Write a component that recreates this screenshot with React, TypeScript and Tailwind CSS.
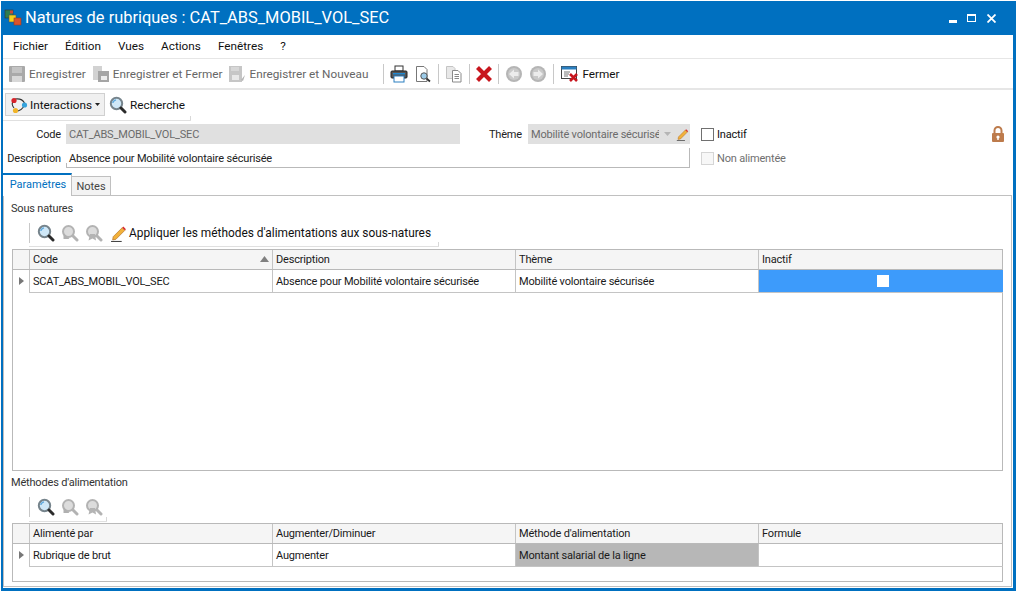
import React from "react";

const font = { fontFamily: 'Roboto, Tahoma, sans-serif' };

function Logo() {
  return (
    <svg width="18" height="18" viewBox="0 0 18 18">
      <rect x="1" y="1" width="8" height="8" fill="#2e7d4f" stroke="#333" strokeWidth="0.6" />
      <rect x="6" y="1.5" width="3" height="3" fill="#c9473a" />
      <rect x="5" y="6" width="7" height="7" fill="#f2d21b" stroke="#555" strokeWidth="0.6" />
      <rect x="10" y="9" width="7" height="7" fill="#d9532c" stroke="#9a3a20" strokeWidth="0.6" />
    </svg>
  );
}

function Save({ variant }: { variant: 0 | 1 | 2 }) {
  return (
    <svg width="18" height="18" viewBox="0 0 18 18">
      {variant === 0 && <rect x="1" y="1" width="16" height="16" rx="1" fill="#a9a9a9" />}
      {variant === 0 && <path d="M4 3 H14 M4 5 H14 M4 7 H14" stroke="#dedede" />}
      {variant === 0 && <rect x="4" y="11" width="10" height="6" fill="#d8d8d8" />}
      {variant === 1 && <rect x="1" y="1" width="9" height="14" fill="#d2d2d2" />}
      {variant === 1 && <rect x="6" y="6" width="11" height="11" fill="#a5a5a5" />}
      {variant === 1 && <rect x="9" y="11" width="6" height="4" fill="#ececec" />}
      {variant === 2 && <rect x="1" y="1" width="13" height="16" fill="#c6c6c6" />}
      {variant === 2 && <path d="M3 3 H11 M3 5 H11" stroke="#e8e8e8" />}
      {variant === 2 && <rect x="4" y="10" width="7" height="5" fill="#e8e8e8" />}
      {variant === 2 && <path d="M13 15 L17 10 L15 16 Z" fill="#b4b4b4" />}
    </svg>
  );
}

function Printer() {
  return (
    <svg width="18" height="18" viewBox="0 0 18 18">
      <rect x="5" y="1" width="8" height="5" fill="#fff" stroke="#333" />
      <rect x="1" y="6" width="16" height="7" rx="1" fill="#555" stroke="#222" />
      <rect x="3" y="8" width="12" height="1.5" fill="#1e88d2" />
      <rect x="4" y="11" width="10" height="6" fill="#fff" stroke="#2a7fc0" />
    </svg>
  );
}

function Preview() {
  return (
    <svg width="18" height="18" viewBox="0 0 18 18">
      <path d="M2.5 1.5 H10 L13 4.5 V16.5 H2.5 Z" fill="#fff" stroke="#777" />
      <circle cx="10" cy="11" r="3.2" fill="#9ccbe8" stroke="#555" />
      <path d="M12.5 13.5 L16 16.5" stroke="#333" strokeWidth="1.8" />
    </svg>
  );
}

function CopyDoc() {
  return (
    <svg width="18" height="18" viewBox="0 0 18 18">
      <path d="M1.5 1.5 H8 L10 3.5 V13.5 H1.5 Z" fill="#e8e8e8" stroke="#c4c4c4" />
      <path d="M7.5 5.5 H13 L16 8.5 V17 H7.5 Z" fill="#fff" stroke="#8a8a8a" />
      <path d="M9.5 9.5 H14 M9.5 11.5 H14 M9.5 13.5 H14" stroke="#888" />
    </svg>
  );
}

function RedX({ size = 18 }: { size?: number }) {
  return (
    <svg width={size} height={size} viewBox="0 0 18 18">
      <path d="M2.5 2.5 L15.5 15.5 M15.5 2.5 L2.5 15.5" stroke="#c8161e" strokeWidth="4.2" />
    </svg>
  );
}

function Nav({ dir }: { dir: "l" | "r" }) {
  return (
    <svg width="18" height="18" viewBox="0 0 18 18">
      <circle cx="9" cy="9" r="8" fill="#b5b5b5" />
      <circle cx="9" cy="9" r="6" fill="#c9c9c9" />
      {dir === "l" ? (
        <path d="M4 9 L9 4.5 V7 H13.5 V11 H9 V13.5 Z" fill="#ececec" />
      ) : (
        <path d="M14 9 L9 4.5 V7 H4.5 V11 H9 V13.5 Z" fill="#ececec" />
      )}
    </svg>
  );
}

function CloseWin() {
  return (
    <svg width="18" height="18" viewBox="0 0 18 18">
      <rect x="0.5" y="1.5" width="15" height="12" fill="#fff" stroke="#444" />
      <rect x="0.5" y="1.5" width="15" height="3" fill="#2a7fc0" />
      <path d="M3 7 H9 M3 9 H8 M3 11 H7" stroke="#777" />
      <path d="M9 9 L16 16 M16 9 L9 16" stroke="#c8161e" strokeWidth="2.6" />
    </svg>
  );
}

function Interactions() {
  return (
    <svg width="18" height="18" viewBox="0 0 18 18">
      <path d="M5 3 Q12 2 14.5 7 M13.5 11 Q11 14.5 8 15 M4 12 Q1 8 3 6" fill="none" stroke="#333" strokeWidth="1.1" />
      <circle cx="4" cy="4.5" r="2.6" fill="#d8232a" />
      <circle cx="14.5" cy="9" r="2.6" fill="#36a3dc" />
      <circle cx="5.5" cy="14.5" r="2.6" fill="#f0b429" />
    </svg>
  );
}

function Magnifier() {
  return (
    <svg width="18" height="18" viewBox="0 0 18 18">
      <circle cx="7.5" cy="7.5" r="5.7" fill="#cfe8f8" stroke="#76848c" strokeWidth="2" />
      <path d="M3.8 7 A4 4 0 0 1 7 3.8" fill="none" stroke="#5fa9dd" strokeWidth="1.3" />
      <path d="M12 12 L16 16" stroke="#2b2b2b" strokeWidth="3" strokeLinecap="round" />
    </svg>
  );
}

function MagnifierOff({ star }: { star?: boolean }) {
  return (
    <svg width="18" height="18" viewBox="0 0 18 18">
      <circle cx="7.5" cy="7.5" r="5.5" fill="#dcdcdc" stroke="#b3b3b3" strokeWidth="2" />
      <path d="M12 12 L16 16" stroke="#b3b3b3" strokeWidth="3" strokeLinecap="round" />
      {star ? (
        <path d="M5 10 L3.5 16.5 L7.5 14.5 L11 16.5 L10 10 Z" fill="#b4b4b4" />
      ) : (
        <path d="M2.5 9 L2.5 15 L8.5 15 Z" fill="#b0b0b0" />
      )}
    </svg>
  );
}

function Pencil({ size = 16 }: { size?: number }) {
  return (
    <svg width={size} height={size} viewBox="0 0 16 16">
      <path d="M3 11 L11.5 2.5 L14 5 L5.5 13.5 L2.5 14 Z" fill="#f2b13a" stroke="#b9772a" strokeWidth="0.7" />
      <path d="M11.5 2.5 L14 5 L15 4 L12.5 1.5 Z" fill="#d8262c" />
      <path d="M1 15.5 H11" stroke="#444" />
    </svg>
  );
}

function Lock() {
  return (
    <svg width="14" height="16" viewBox="0 0 14 16">
      <path d="M3.5 7 V4.5 a3.5 3.5 0 0 1 7 0 V7" fill="none" stroke="#bd7b4c" strokeWidth="2" />
      <rect x="1" y="7" width="12" height="9" rx="1" fill="#bd7b4c" />
      <circle cx="7" cy="11" r="1.6" fill="#fff" />
      <rect x="6.3" y="11" width="1.4" height="3" fill="#fff" />
    </svg>
  );
}

function Sep() {
  return <div className="w-px h-[20px] bg-[#c8c8c8]" />;
}

function Tick() {
  return <div className="absolute right-0 bottom-0 w-px h-[4px] bg-[#d8d8d8]" />;
}

function ToolBtn({ icon, label, muted }: { icon: React.ReactNode; label: string; muted?: boolean }) {
  return (
    <div className="flex items-center gap-[3px]">
      {icon}
      <span className={muted ? "text-[#666] pt-[2px]" : "text-[#111] pt-[2px]"}>{label}</span>
    </div>
  );
}

function Grid({
  headers,
  cells,
  height,
  selected,
}: {
  headers: string[];
  cells: React.ReactNode[];
  height: string;
  selected: number;
}) {
  const cols = "grid grid-cols-[16px_243px_243px_243px_245px]";
  return (
    <div className={`mx-[8px] border border-[#b9b9b9] ${height} text-[#1a1a1a] tracking-[-0.18px]`}>
      <div className={`${cols} h-[20px] bg-[#f5f5f5] border-b border-[#b9b9b9]`}>
        <div />
        {headers.map((h, i) => (
          <div key={i} className="relative flex items-center pl-[3px] border-l border-[#c4c4c4]">
            {h}
            {h === "Code" && (
              <svg className="absolute right-[3px] top-[6px]" width="9" height="6" viewBox="0 0 9 6">
                <path d="M0 6 L4.5 0 L9 6 Z" fill="#808080" />
              </svg>
            )}
          </div>
        ))}
      </div>
      <div className={`${cols} h-[23px]`}>
        <div className="flex items-center justify-center border-b border-transparent">
          <svg width="5" height="8" viewBox="0 0 5 8">
            <path d="M0 0 L5 4 L0 8 Z" fill="#777" />
          </svg>
        </div>
        {cells.map((c, i) => (
          <div
            key={i}
            className={
              "flex items-center pl-[3px] border-l border-b border-[#c4c4c4] " +
              (i === selected && selected === 3 ? "bg-[#3d9bfb] justify-center border-[#3d9bfb] pl-0 " : "") +
              (i === selected && selected === 2 ? "bg-[#b7b7b7] " : "")
            }
          >
            {c}
          </div>
        ))}
      </div>
    </div>
  );
}

export default function App() {
  return (
    <div
      className="w-[1016px] h-[591px] flex flex-col bg-[#0070c0] border-t border-l border-white pl-[2px] pr-[3px] pb-[3px] overflow-hidden text-[11px] leading-none"
      style={font}
    >
      <div className="h-[34px] shrink-0 flex items-center text-white">
        <div className="ml-[1px] mr-[3px] -mt-[1px]">
          <Logo />
        </div>
        <span className="text-[16.4px] flex-1 font-normal pt-[1px]">Natures de rubriques : CAT_ABS_MOBIL_VOL_SEC</span>
        <div className="flex items-center gap-[10px] mr-[17px]">
          <div className="w-[8px] h-[2.5px] bg-white mt-[7px]" />
          <div className="w-[9px] h-[8px] border border-white border-t-[2px]" />
          <svg width="9" height="9" viewBox="0 0 9 9" className="ml-[1px]">
            <path d="M0.5 0.5 L8.5 8.5 M8.5 0.5 L0.5 8.5" stroke="#fff" strokeWidth="1.8" />
          </svg>
        </div>
      </div>

      <div className="flex-1 flex flex-col bg-white min-h-0">
        <div className="h-[24px] shrink-0 flex items-center gap-[17px] pl-[10px] border-b border-[#e6e6e6] text-[#111] text-[11.75px]">
          <span>Fichier</span>
          <span>Édition</span>
          <span>Vues</span>
          <span>Actions</span>
          <span>Fenêtres</span>
          <span>?</span>
        </div>

        <div className="h-[31px] shrink-0 flex items-center pl-[5px] border-b-2 border-[#e6e6e6] text-[11.75px]">
          <ToolBtn muted icon={<Save variant={0} />} label="Enregistrer" />
          <div className="w-[6px]" />
          <ToolBtn muted icon={<Save variant={1} />} label="Enregistrer et Fermer" />
          <div className="w-[6px]" />
          <ToolBtn muted icon={<Save variant={2} />} label="Enregistrer et Nouveau" />
          <div className="w-[15px]" />
          <Sep />
          <div className="ml-[6px] flex items-center gap-[6px]">
            <Printer />
            <Preview />
          </div>
          <div className="w-[6px]" />
          <Sep />
          <div className="mx-[6px]">
            <CopyDoc />
          </div>
          <Sep />
          <div className="mx-[5px]">
            <RedX />
          </div>
          <Sep />
          <div className="ml-[6px] flex gap-[6px]">
            <Nav dir="l" />
            <Nav dir="r" />
          </div>
          <div className="w-[6px]" />
          <Sep />
          <div className="ml-[7px]">
            <ToolBtn icon={<CloseWin />} label="Fermer" />
          </div>
        </div>

        <div className="relative h-[31px] shrink-0 w-[188px] flex items-start pt-[3px] pl-[2px] text-[11.75px] border-b border-[#e0e0e0]">
          <Tick />
          <div className="h-[23px] flex items-center gap-[2px] px-[4px] bg-[#f0f0f0] border border-[#d0d0d0] text-[#111]">
            <Interactions />
            <span className="pt-[2px]">Interactions</span>
            <svg width="5" height="3" viewBox="0 0 5 3" className="ml-[1px]">
              <path d="M0 0 H5 L2.5 3 Z" fill="#222" />
            </svg>
          </div>
          <div className="ml-[4px] h-[23px] flex items-center gap-[3px] text-[#111]">
            <Magnifier />
            <span className="pt-[2px]">Recherche</span>
          </div>
        </div>

        <div className="h-[52px] shrink-0 grid grid-cols-[58px_399px_68px_162px_1fr] grid-rows-[20px_20px] gap-y-[4px] pt-[3px] text-[#222] tracking-[-0.18px]">
          <div className="flex items-center justify-end">Code</div>
          <div className="ml-[5px] bg-[#e0e0e0] text-[#6b6b6b] flex items-center pl-[3px]">CAT_ABS_MOBIL_VOL_SEC</div>
          <div className="flex items-center justify-end pr-[6px]">Thème</div>
          <div className="bg-[#e0e0e0] text-[#6b6b6b] flex items-center pl-[3px] pr-[1px] overflow-hidden">
            <span className="w-[128px] overflow-hidden whitespace-nowrap">Mobilité volontaire sécurisée</span>
            <svg width="7" height="4" viewBox="0 0 7 4" className="ml-[5px]">
              <path d="M0 0 H7 L3.5 4 Z" fill="#b5b5b5" />
            </svg>
            <span className="ml-[5px]">
              <Pencil size={13} />
            </span>
          </div>
          <div className="flex items-center pl-[11px] pr-[7px]">
            <div className="w-[13px] h-[13px] border border-[#707070] bg-white" />
            <span className="ml-[3px] text-[#111]">Inactif</span>
            <span className="ml-auto mr-[1px]">
              <Lock />
            </span>
          </div>

          <div className="flex items-center justify-end pt-[1px]">Description</div>
          <div className="col-span-3 ml-[5px] flex items-center pl-[3px] pt-[1px] border-b border-r border-[#b9b9b9] relative">
            <div className="absolute left-0 bottom-0 w-px h-[4px] bg-[#b9b9b9]" />
            Absence pour Mobilité volontaire sécurisée
          </div>
          <div className="flex items-center pl-[11px]">
            <div className="w-[13px] h-[13px] border border-[#d5d5d5] bg-[#f7f7f7]" />
            <span className="ml-[3px] text-[#6f6f6f]">Non alimentée</span>
          </div>
        </div>

        <div className="flex-1 flex flex-col min-h-0 pr-[1px] pb-[1px]">
          <div className="h-[23px] shrink-0 flex items-end">
            <div className="w-[69px] h-[23px] border-t-2 border-[#0070c0] flex items-center justify-center text-[#0070c0] bg-white border-r border-r-[#c0c0c0] pb-[2px] pl-[2px]">
              Paramètres
            </div>
            <div className="w-[39px] h-[20px] border-t border-r border-[#c0c0c0] bg-[#f3f3f3] flex items-center justify-center text-[#444] border-b">
              Notes
            </div>
            <div className="flex-1 border-b border-[#c0c0c0]" />
          </div>

          <div className="flex-1 flex flex-col min-h-0 border-l border-r border-b border-[#c0c0c0] text-[#222]">
            <div className="h-[22px] shrink-0 flex items-center pl-[7px] pt-[2px] text-[#333] tracking-[-0.18px]">Sous natures</div>
            <div className="relative h-[29px] shrink-0 ml-[25px] w-[410px] flex items-center border-b border-[#e0e0e0] pt-[2px]">
              <Tick />
              <div className="w-px h-[20px] bg-[#c8c8c8] mr-[7px]" />
              <Magnifier />
              <span className="ml-[6px]"><MagnifierOff /></span>
              <span className="ml-[6px]"><MagnifierOff star /></span>
              <span className="ml-[7px]"><Pencil size={17} /></span>
              <span className="ml-[2px] text-[#111] text-[11.9px] pt-[1px]">Appliquer les méthodes d'alimentations aux sous-natures</span>
            </div>
            <div className="h-[2px] shrink-0" />
            <Grid
              height="h-[222px] shrink-0"
              headers={["Code", "Description", "Thème", "Inactif"]}
              selected={3}
              cells={[
                "SCAT_ABS_MOBIL_VOL_SEC",
                "Absence pour Mobilité volontaire sécurisée",
                "Mobilité volontaire sécurisée",
                <div className="w-[12px] h-[12px] bg-white" />,
              ]}
            />
            <div className="h-[20px] shrink-0 flex items-center pl-[7px] pt-[2px] text-[#333] tracking-[-0.18px]">Méthodes d'alimentation</div>
            <div className="relative h-[31px] shrink-0 ml-[25px] w-[78px] flex items-center border-b border-[#e0e0e0] pt-[2px]">
              <Tick />
              <div className="w-px h-[20px] bg-[#c8c8c8] mr-[7px]" />
              <Magnifier />
              <span className="ml-[6px]"><MagnifierOff /></span>
              <span className="ml-[6px]"><MagnifierOff star /></span>
            </div>
            <div className="h-[1px] shrink-0" />
            <Grid
              height="h-[59px] shrink-0"
              headers={["Alimenté par", "Augmenter/Diminuer", "Méthode d'alimentation", "Formule"]}
              selected={2}
              cells={["Rubrique de brut", "Augmenter", "Montant salarial de la ligne", ""]}
            />
          </div>
        </div>
      </div>
    </div>
  );
}
